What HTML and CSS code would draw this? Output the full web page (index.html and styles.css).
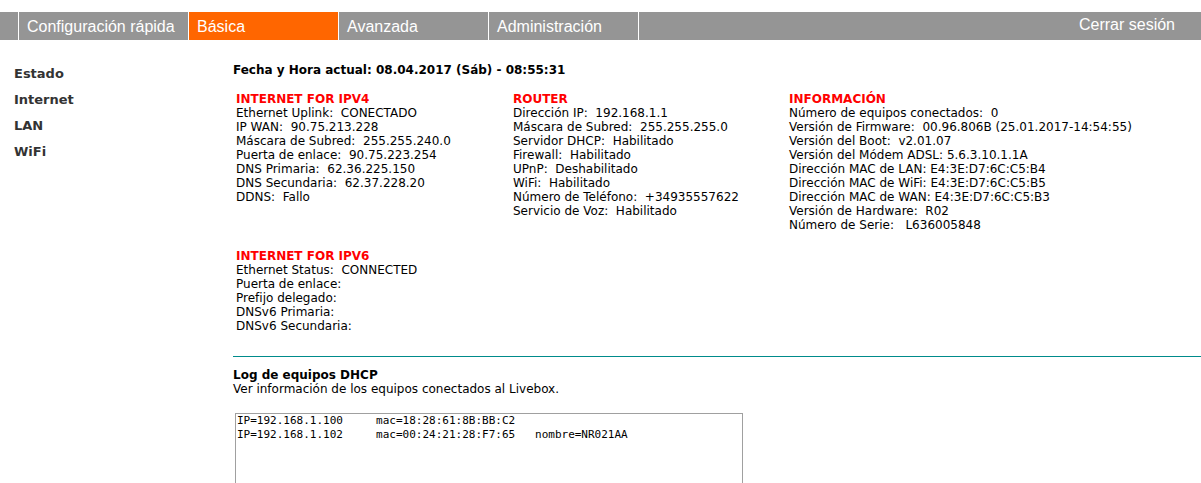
FILE: index.html
```html
<!DOCTYPE html>
<html lang="es">
<head>
<meta charset="utf-8">
<title>Livebox - Básica</title>
<link rel="stylesheet" href="styles.css">
</head>
<body>
<nav class="topnav">
  <span class="nav-lead"></span>
  <a class="tab tab-wide">Configuración rápida</a>
  <a class="tab tab-active">Básica</a>
  <a class="tab">Avanzada</a>
  <a class="tab">Administración</a>
  <span class="nav-rest"><a class="logout">Cerrar sesión</a></span>
</nav>
<div class="page">
  <aside class="sidebar">
    <a class="side-item">Estado</a>
    <a class="side-item">Internet</a>
    <a class="side-item">LAN</a>
    <a class="side-item">WiFi</a>
  </aside>
  <main class="main">
    <div class="datetime">Fecha y Hora actual: 08.04.2017 (Sáb) - 08:55:31</div>
    <div class="status-grid">
      <section class="block">
        <h3 class="block-title">INTERNET FOR IPV4</h3>
        <div class="row">Ethernet Uplink:  CONECTADO</div>
        <div class="row">IP WAN:  90.75.213.228</div>
        <div class="row">Máscara de Subred:  255.255.240.0</div>
        <div class="row">Puerta de enlace:  90.75.223.254</div>
        <div class="row">DNS Primaria:  62.36.225.150</div>
        <div class="row">DNS Secundaria:  62.37.228.20</div>
        <div class="row">DDNS:  Fallo</div>
      </section>
      <section class="block">
        <h3 class="block-title">ROUTER</h3>
        <div class="row">Dirección IP:  192.168.1.1</div>
        <div class="row">Máscara de Subred:  255.255.255.0</div>
        <div class="row">Servidor DHCP:  Habilitado</div>
        <div class="row">Firewall:  Habilitado</div>
        <div class="row">UPnP:  Deshabilitado</div>
        <div class="row">WiFi:  Habilitado</div>
        <div class="row">Número de Teléfono:  +34935557622</div>
        <div class="row">Servicio de Voz:  Habilitado</div>
      </section>
      <section class="block">
        <h3 class="block-title">INFORMACIÓN</h3>
        <div class="row">Número de equipos conectados:  0</div>
        <div class="row">Versión de Firmware:  00.96.806B (25.01.2017-14:54:55)</div>
        <div class="row">Versión del Boot:  v2.01.07</div>
        <div class="row">Versión del Módem ADSL: 5.6.3.10.1.1A</div>
        <div class="row">Dirección MAC de LAN: E4:3E:D7:6C:C5:B4</div>
        <div class="row">Dirección MAC de WiFi: E4:3E:D7:6C:C5:B5</div>
        <div class="row">Dirección MAC de WAN: E4:3E:D7:6C:C5:B3</div>
        <div class="row">Versión de Hardware:  R02</div>
        <div class="row">Número de Serie:   L636005848</div>
      </section>
    </div>
    <section class="block block-ipv6">
      <h3 class="block-title">INTERNET FOR IPV6</h3>
      <div class="row">Ethernet Status:  CONNECTED</div>
      <div class="row">Puerta de enlace:</div>
      <div class="row">Prefijo delegado:</div>
      <div class="row">DNSv6 Primaria:</div>
      <div class="row">DNSv6 Secundaria:</div>
    </section>
    <hr class="divider">
    <section class="dhcp">
      <h3 class="dhcp-title">Log de equipos DHCP</h3>
      <p class="dhcp-desc">Ver información de los equipos conectados al Livebox.</p>
      <div class="log-box">IP=192.168.1.100     mac=18:28:61:8B:BB:C2
IP=192.168.1.102     mac=00:24:21:28:F7:65   nombre=NR021AA</div>
    </section>
  </main>
</div>
</body>
</html>
```
FILE: styles.css
```css
html, body {
  margin: 0;
  padding: 0;
  background: #ffffff;
}

body {
  font-family: "DejaVu Sans", Verdana, sans-serif;
  font-size: 12px;
  color: #000;
}

.topnav {
  display: flex;
  margin-top: 12px;
  height: 28px;
  background: #959595;
  font-family: "Liberation Sans", Arial, sans-serif;
  font-size: 16px;
  line-height: 28px;
  color: #fff;
}

.nav-lead {
  width: 18px;
  flex: none;
}

.tab {
  flex: none;
  width: 141px;
  padding: 1px 0 0 8px;
  border-left: 1px solid #fff;
  color: #fff;
  text-decoration: none;
  line-height: 27px;
}

.tab-wide {
  width: 161px;
}

.tab-active {
  background: #ff6600;
}

.nav-rest {
  flex: 1;
  display: flex;
  justify-content: flex-end;
  border-left: 1px solid #fff;
  padding-right: 26px;
}

.logout {
  color: #fff;
  line-height: 26px;
}

.page {
  display: flex;
}

.sidebar {
  flex: none;
  width: 219px;
  padding: 21px 0 0 14px;
  display: flex;
  flex-direction: column;
}

.side-item {
  font-size: 13px;
  font-weight: bold;
  line-height: 26px;
  color: #333;
}

.main {
  flex: 1;
  padding-top: 23px;
}

.datetime {
  font-weight: bold;
  line-height: 14px;
}

.status-grid {
  display: grid;
  grid-template-columns: 277px 276px 1fr;
  margin-top: 15px;
}

.block {
  padding-left: 3px;
  line-height: 14px;
}

.block-title {
  margin: 0;
  font-size: 12px;
  font-weight: bold;
  color: #ff0000;
  line-height: 14px;
}

.row {
  white-space: pre;
}

.block-ipv6 {
  margin-top: 17px;
}

.divider {
  margin: 23px 0 0 0;
  border: 0;
  height: 1px;
  background: #008b8b;
}

.dhcp {
  padding-top: 11px;
  line-height: 14px;
}

.dhcp-title {
  margin: 0;
  font-size: 12px;
  font-weight: bold;
  line-height: 14px;
}

.dhcp-desc {
  margin: 0;
}

.log-box {
  margin: 17px 0 0 2px;
  width: 504px;
  height: 150px;
  padding: 0 1px;
  border: 1px solid #a0a0a0;
  font-family: "DejaVu Sans Mono", monospace;
  font-size: 11px;
  line-height: 14px;
  white-space: pre;
}
```
